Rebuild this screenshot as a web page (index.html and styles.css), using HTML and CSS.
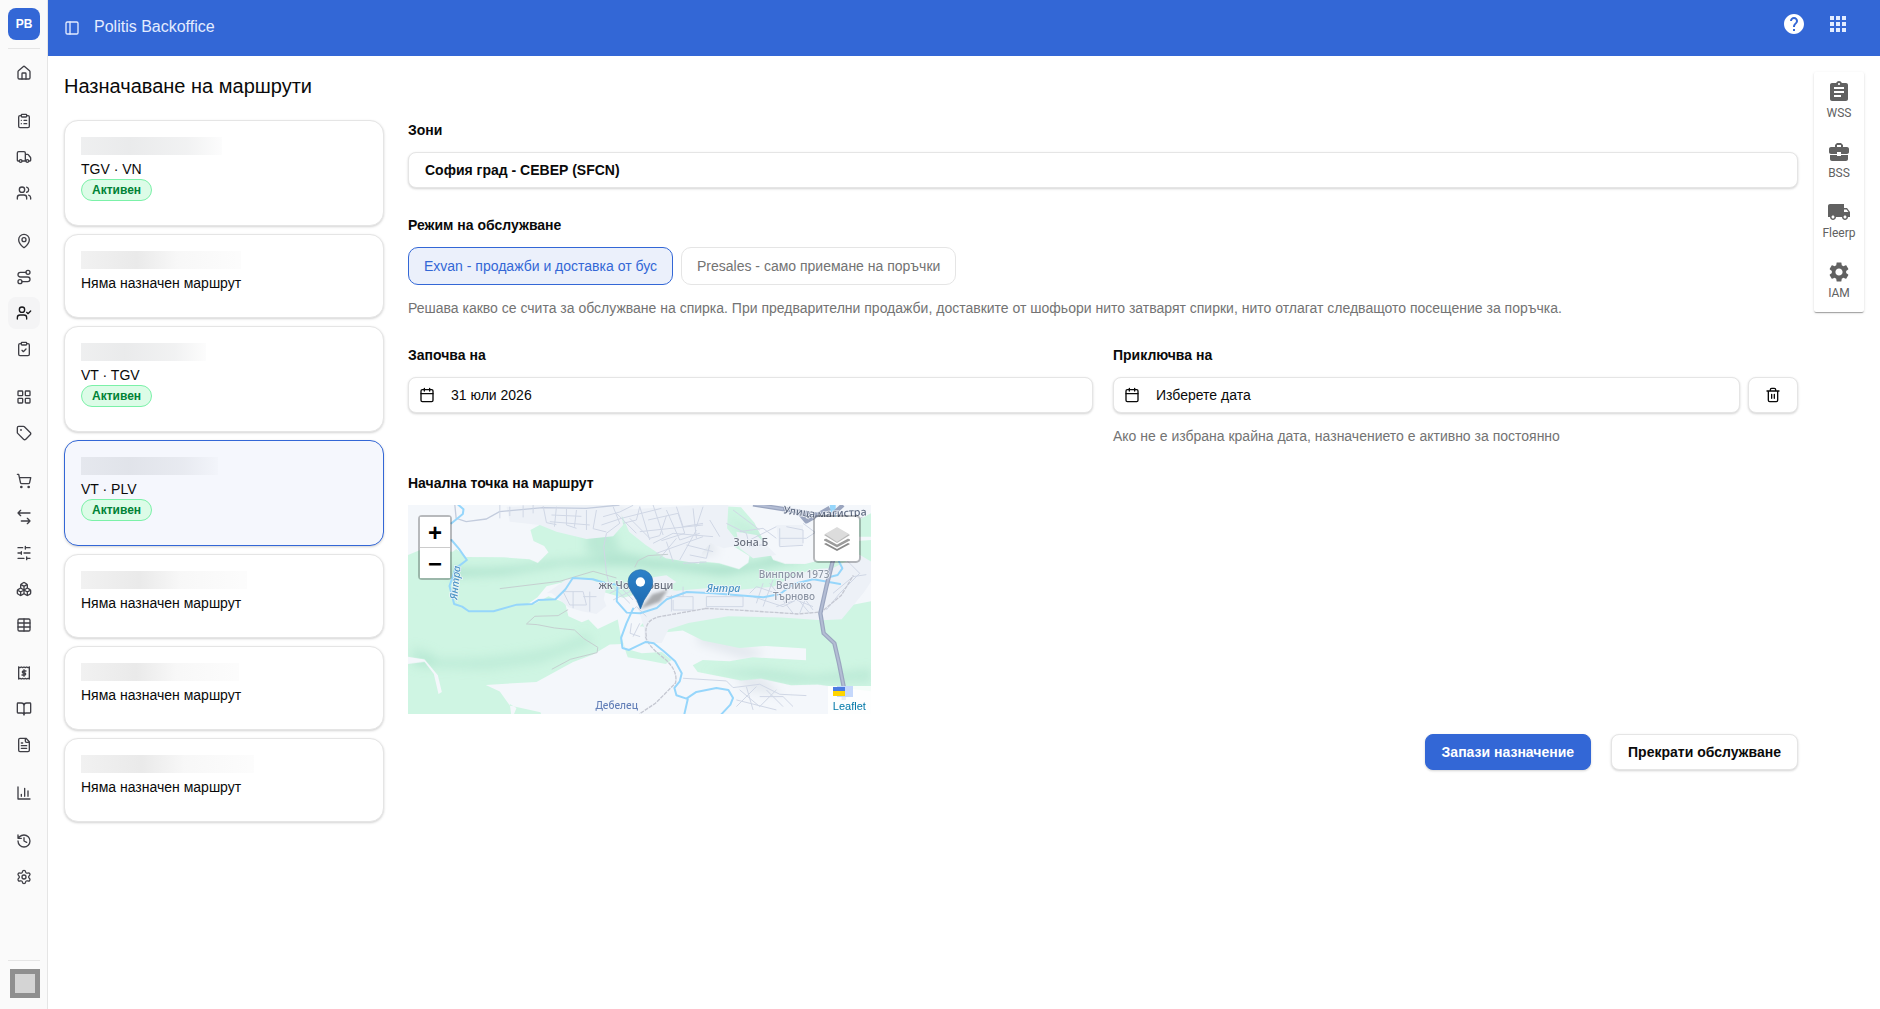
FILE: index.html
```html
<!DOCTYPE html>
<html lang="bg">
<head>
<meta charset="utf-8">
<meta name="viewport" content="width=device-width, initial-scale=1">
<title>Politis Backoffice</title>
<link rel="stylesheet" href="styles.css">
</head>
<body>
<div class="app">
  <aside class="sidebar">
    <a class="logo" href="#">PB</a>
    <nav class="nav" aria-label="Меню">
      <div class="nav-group">
        <a class="nav-item" href="#" aria-label="Начало"><svg class="icon" viewBox="0 0 24 24"><path d="M15 21v-8a1 1 0 0 0-1-1h-4a1 1 0 0 0-1 1v8"/><path d="M3 10a2 2 0 0 1 .709-1.528l7-5.999a2 2 0 0 1 2.582 0l7 5.999A2 2 0 0 1 21 10v9a2 2 0 0 1-2 2H5a2 2 0 0 1-2-2z"/></svg></a>
      </div>
      <div class="nav-group">
        <a class="nav-item" href="#" aria-label="Поръчки"><svg class="icon" viewBox="0 0 24 24"><rect width="8" height="4" x="8" y="2" rx="1"/><path d="M16 4h2a2 2 0 0 1 2 2v14a2 2 0 0 1-2 2H6a2 2 0 0 1-2-2V6a2 2 0 0 1 2-2h2M12 11h4M12 16h4M8 11h.01M8 16h.01"/></svg></a>
        <a class="nav-item" href="#" aria-label="Доставки"><svg class="icon" viewBox="0 0 24 24"><path d="M14 18V6a2 2 0 0 0-2-2H4a2 2 0 0 0-2 2v11a1 1 0 0 0 1 1h2M15 18H9M19 18h2a1 1 0 0 0 1-1v-3.65a1 1 0 0 0-.22-.624l-3.48-4.35A1 1 0 0 0 17.52 8H14"/><circle cx="17" cy="18" r="2"/><circle cx="7" cy="18" r="2"/></svg></a>
        <a class="nav-item" href="#" aria-label="Клиенти"><svg class="icon" viewBox="0 0 24 24"><path d="M16 21v-2a4 4 0 0 0-4-4H6a4 4 0 0 0-4 4v2"/><circle cx="9" cy="7" r="4"/><path d="M22 21v-2a4 4 0 0 0-3-3.87M16 3.13a4 4 0 0 1 0 7.75"/></svg></a>
      </div>
      <div class="nav-group">
        <a class="nav-item" href="#" aria-label="Обекти"><svg class="icon" viewBox="0 0 24 24"><path d="M20 10c0 4.993-5.539 10.193-7.399 11.799a1 1 0 0 1-1.202 0C9.539 20.193 4 14.993 4 10a8 8 0 0 1 16 0"/><circle cx="12" cy="10" r="3"/></svg></a>
        <a class="nav-item" href="#" aria-label="Маршрути"><svg class="icon" viewBox="0 0 24 24"><circle cx="6" cy="19" r="3"/><path d="M9 19h8.500a3.500 3.500 0 0 0 0-7h-11a3.500 3.500 0 0 1 0-7H15"/><circle cx="18" cy="5" r="3"/></svg></a>
        <a class="nav-item nav-item--active" href="#" aria-label="Назначаване на маршрути" aria-current="page"><svg class="icon" viewBox="0 0 24 24"><path d="m16 11 2 2 4-4M16 21v-2a4 4 0 0 0-4-4H6a4 4 0 0 0-4 4v2"/><circle cx="9" cy="7" r="4"/></svg></a>
        <a class="nav-item" href="#" aria-label="Задачи"><svg class="icon" viewBox="0 0 24 24"><rect width="8" height="4" x="8" y="2" rx="1"/><path d="M16 4h2a2 2 0 0 1 2 2v14a2 2 0 0 1-2 2H6a2 2 0 0 1-2-2V6a2 2 0 0 1 2-2h2M9 14l2 2 4-4"/></svg></a>
      </div>
      <div class="nav-group">
        <a class="nav-item" href="#" aria-label="Категории"><svg class="icon" viewBox="0 0 24 24"><rect width="7" height="7" x="3" y="3" rx="1"/><rect width="7" height="7" x="14" y="3" rx="1"/><rect width="7" height="7" x="14" y="14" rx="1"/><rect width="7" height="7" x="3" y="14" rx="1"/></svg></a>
        <a class="nav-item" href="#" aria-label="Етикети"><svg class="icon" viewBox="0 0 24 24"><path d="M12.586 2.586A2 2 0 0 0 11.172 2H4a2 2 0 0 0-2 2v7.172a2 2 0 0 0 .586 1.414l8.704 8.704a2.426 2.426 0 0 0 3.420 0l6.580-6.580a2.426 2.426 0 0 0 0-3.420z"/><circle cx="7.500" cy="7.500" r=".5"/></svg></a>
      </div>
      <div class="nav-group">
        <a class="nav-item" href="#" aria-label="Продажби"><svg class="icon" viewBox="0 0 24 24"><circle cx="8" cy="21" r="1"/><circle cx="19" cy="21" r="1"/><path d="M2.050 2.050h2l2.660 12.420a2 2 0 0 0 2 1.580h9.780a2 2 0 0 0 1.950-1.570l1.650-7.430H5.120"/></svg></a>
        <a class="nav-item" href="#" aria-label="Движения"><svg class="icon" viewBox="0 0 24 24"><path d="M21 18H8M17 22l4-4-4-4M3 6h18M7 2 3 6l4 4"/></svg></a>
        <a class="nav-item" href="#" aria-label="Настройки на наличности"><svg class="icon" viewBox="0 0 24 24"><path d="M21 4h-7M10 4H3M21 12h-9M8 12H3M21 20h-5M12 20H3M14 2v4M8 10v4M16 18v4"/></svg></a>
        <a class="nav-item" href="#" aria-label="Складове"><svg class="icon" viewBox="0 0 24 24"><path d="M2.970 12.920A2 2 0 0 0 2 14.630v3.240a2 2 0 0 0 .97 1.710l3 1.800a2 2 0 0 0 2.060 0L12 19v-5.500l-5-3-4.030 2.420ZM7 16.500l-4.740-2.850M7 16.500l5-3M7 16.500v5.170M12 13.500V19l3.970 2.380a2 2 0 0 0 2.060 0l3-1.800a2 2 0 0 0 .97-1.710v-3.240a2 2 0 0 0-.97-1.710L17 10.500l-5 3ZM17 16.500l-5-3M17 16.500l4.740-2.850M17 16.500v5.170M7.970 4.420A2 2 0 0 0 7 6.130v4.370l5 3 5-3V6.130a2 2 0 0 0-.97-1.710l-3-1.800a2 2 0 0 0-2.060 0l-3 1.800ZM12 8 7.260 5.150M12 8l4.740-2.850M12 13.500V8"/></svg></a>
        <a class="nav-item" href="#" aria-label="Таблици"><svg class="icon" viewBox="0 0 24 24"><rect width="18" height="18" x="3" y="3" rx="2"/><path d="M12 3v18M3 9h18M3 15h18"/></svg></a>
      </div>
      <div class="nav-group">
        <a class="nav-item" href="#" aria-label="Фактури"><svg class="icon" viewBox="0 0 24 24"><path d="M4 3v18M20 3v18M4 3l2 1 2-1 2 1 2-1 2 1 2-1 2 1 2-1M4 21l2-1 2 1 2-1 2 1 2-1 2 1 2-1 2 1M15 9h-4a1.500 1.500 0 0 0 0 3h2a1.500 1.500 0 0 1 0 3H9M12 7v10"/></svg></a>
        <a class="nav-item" href="#" aria-label="Каталог"><svg class="icon" viewBox="0 0 24 24"><path d="M12 7v14M3 18a1 1 0 0 1-1-1V4a1 1 0 0 1 1-1h5a4 4 0 0 1 4 4 4 4 0 0 1 4-4h5a1 1 0 0 1 1 1v13a1 1 0 0 1-1 1h-6a3 3 0 0 0-3 3 3 3 0 0 0-3-3z"/></svg></a>
        <a class="nav-item" href="#" aria-label="Документи"><svg class="icon" viewBox="0 0 24 24"><path d="M15 2H6a2 2 0 0 0-2 2v16a2 2 0 0 0 2 2h12a2 2 0 0 0 2-2V7ZM14 2v4a2 2 0 0 0 2 2h4M10 9H8M16 13H8M16 17H8"/></svg></a>
      </div>
      <div class="nav-group">
        <a class="nav-item" href="#" aria-label="Отчети"><svg class="icon" viewBox="0 0 24 24"><path d="M3 3v18h18M18 17V9M13 17V5M8 17v-3"/></svg></a>
      </div>
      <div class="nav-group">
        <a class="nav-item" href="#" aria-label="История"><svg class="icon" viewBox="0 0 24 24"><path d="M3 12a9 9 0 1 0 9-9 9.750 9.750 0 0 0-6.740 2.740L3 8M3 3v5h5M12 7v5l4 2"/></svg></a>
        <a class="nav-item" href="#" aria-label="Настройки"><svg class="icon" viewBox="0 0 24 24"><path d="M9.671 4.136a2.340 2.340 0 0 1 4.659 0 2.340 2.340 0 0 0 3.319 1.915 2.340 2.340 0 0 1 2.330 4.033 2.340 2.340 0 0 0 0 3.831 2.340 2.340 0 0 1-2.330 4.033 2.340 2.340 0 0 0-3.319 1.915 2.340 2.340 0 0 1-4.659 0 2.340 2.340 0 0 0-3.320-1.915 2.340 2.340 0 0 1-2.330-4.033 2.340 2.340 0 0 0 0-3.831A2.340 2.340 0 0 1 6.350 6.051a2.340 2.340 0 0 0 3.319-1.915"/><circle cx="12" cy="12" r="3"/></svg></a>
      </div>
    </nav>
    <div class="sidebar-foot">
      <button class="avatar" type="button" aria-label="Профил"></button>
    </div>
  </aside>

  <div class="shell">
    <header class="topbar">
      <button class="icon-button" type="button" aria-label="Скрий менюто"><svg class="icon" viewBox="0 0 24 24"><rect width="18" height="18" x="3" y="3" rx="2"/><path d="M9 3v18"/></svg></button>
      <span class="topbar-title">Politis Backoffice</span>
      <div class="topbar-actions">
        <button class="icon-button icon-button--help" type="button" aria-label="Помощ"><svg class="glyph" viewBox="0 0 24 24"><path d="M12 2C6.480 2 2 6.480 2 12s4.480 10 10 10 10-4.480 10-10S17.520 2 12 2zm1 17h-2v-2h2v2zm2.070-7.750-.9.92C13.450 12.900 13 13.500 13 15h-2v-.5c0-1.100.45-2.100 1.170-2.830l1.240-1.260c.37-.36.590-.860.590-1.410 0-1.100-.9-2-2-2s-2 .9-2 2H8c0-2.210 1.790-4 4-4s4 1.790 4 4c0 .88-.36 1.680-.93 2.250z"/></svg></button>
        <button class="icon-button" type="button" aria-label="Приложения"><svg class="glyph" viewBox="0 0 24 24"><path d="M4 8h4V4H4v4zm6 12h4v-4h-4v4zm-6 0h4v-4H4v4zm0-6h4v-4H4v4zm6 0h4v-4h-4v4zm6-10v4h4V4h-4zm-6 4h4V4h-4v4zm6 6h4v-4h-4v4zm0 6h4v-4h-4v4z"/></svg></button>
      </div>
    </header>

    <div class="content">
      <main class="page">
        <h1 class="page-title">Назначаване на маршрути</h1>
        <div class="columns">
          <ul class="cards">
            <li><button class="card" type="button"><span class="masked" style="width:141px"></span><span class="card-text">TGV · VN</span><span class="badge">Активен</span></button></li>
            <li><button class="card" type="button"><span class="masked masked--long" style="width:160px"></span><span class="card-text">Няма назначен маршрут</span></button></li>
            <li><button class="card" type="button"><span class="masked" style="width:125px"></span><span class="card-text">VT · TGV</span><span class="badge">Активен</span></button></li>
            <li><button class="card card--selected" type="button" aria-pressed="true"><span class="masked" style="width:137px"></span><span class="card-text">VT · PLV</span><span class="badge">Активен</span></button></li>
            <li><button class="card" type="button"><span class="masked masked--long" style="width:166px"></span><span class="card-text">Няма назначен маршрут</span></button></li>
            <li><button class="card" type="button"><span class="masked masked--long" style="width:158px"></span><span class="card-text">Няма назначен маршрут</span></button></li>
            <li><button class="card" type="button"><span class="masked masked--long" style="width:173px"></span><span class="card-text">Няма назначен маршрут</span></button></li>
          </ul>

          <form class="form">
            <div class="field">
              <label class="label" for="zones">Зони</label>
              <select class="control control--select" id="zones"><option>София град - СЕВЕР (SFCN)</option></select>
            </div>

            <div class="field" role="group" aria-labelledby="mode-label">
              <span class="label" id="mode-label">Режим на обслужване</span>
              <div class="modes">
                <button class="mode mode--selected" type="button" aria-pressed="true">Exvan - продажби и доставка от бус</button>
                <button class="mode" type="button" aria-pressed="false">Presales - само приемане на поръчки</button>
              </div>
              <p class="hint">Решава какво се счита за обслужване на спирка. При предварителни продажби, доставките от шофьори нито затварят спирки, нито отлагат следващото посещение за поръчка.</p>
            </div>

            <div class="dates">
              <div class="field">
                <label class="label" for="start">Започва на</label>
                <button class="control control--date" id="start" type="button"><svg class="icon" viewBox="0 0 24 24"><path d="M8 2v4M16 2v4M3 10h18"/><rect width="18" height="18" x="3" y="4" rx="2"/></svg>31 юли 2026</button>
              </div>
              <div class="field">
                <label class="label" for="end">Приключва на</label>
                <div class="date-row">
                  <button class="control control--date" id="end" type="button"><svg class="icon" viewBox="0 0 24 24"><path d="M8 2v4M16 2v4M3 10h18"/><rect width="18" height="18" x="3" y="4" rx="2"/></svg>Изберете дата</button>
                  <button class="control control--clear" type="button" aria-label="Изчисти датата"><svg class="icon" viewBox="0 0 24 24"><path d="M3 6h18M19 6v14a2 2 0 0 1-2 2H7a2 2 0 0 1-2-2V6M8 6V4a2 2 0 0 1 2-2h4a2 2 0 0 1 2 2v2M10 11v6M14 11v6"/></svg></button>
                </div>
                <p class="hint">Ако не е избрана крайна дата, назначението е активно за постоянно</p>
              </div>
            </div>

            <div class="field">
              <span class="label">Начална точка на маршрут</span>
              <div class="map">
                <svg class="map-tiles" viewBox="24 135 1390 627" preserveAspectRatio="xMidYMid slice" role="img" aria-label="Карта">
                  <defs>
                    <filter id="soft" x="-20%" y="-50%" width="140%" height="200%"><feGaussianBlur stdDeviation="14"/></filter>
                    <filter id="shade" x="-30%" y="-50%" width="160%" height="200%"><feGaussianBlur stdDeviation="4"/></filter>
                    <linearGradient id="pin" x1="0" y1="0" x2="0" y2="1"><stop offset="0" stop-color="#2e82c9"/><stop offset="1" stop-color="#1d69b0"/></linearGradient>
                    <clipPath id="woods"><use href="#wood-north"/><use href="#wood-south"/><use href="#wood-east"/></clipPath>
                  </defs>
                  <rect x="24" y="135" width="1390" height="627" fill="#f4f7fb"/>
                  <g filter="url(#soft)" fill="#e4e9ef">
                    <path d="M24 335h70l60 60-60 30-70-40z"/>
                    <path d="M360 140h300l60 40 180 10 60 90-120 20-80-50-140-50-200-20z"/>
                    <path d="M900 500l200 80-60 20-150-50zM1000 640l90 10 60 60-110-20z"/>
                    <path d="M1300 300l100 10-60 120-60 40-200-20 120-60z"/>
                  </g>
                  <g fill="#cff5e3">
                    <path id="wood-north" d="M24 285l35-14 100 4 10-8 30 24 110 1 80 6 25 11 32-32-13-19-32-15-9-33 40-22 60 12 60 22 66 1 14-20 28-38 30 22 40 8 20 25 18 26 30 20 40 28 60 10 60 6 60 18 28-20 3-20-60-37-38-60 3-53 70 4 40 46 30 60 26 52 36 12h60l58-14 98-55 58-4v80l-60 24-60-10-60 22-80 18-60 34-60 6-110-10-70-8-100-2-60 10-40 10-70-20-70-12-50-12-40 10-27 33-40 28-17 30-50 8-20 12-60 5-40 18-70 6-40 2-40-20-15-30 8-70-45-26-40-8-60-2z"/>
                    <path id="wood-south" d="M24 388l80 52 50-34 12 30 100 20 80-20 60-5 40-22 50 20 10 40 40 18 20-8 28 28 60-28 8 45 14 42 50 14 60-4 30 24-18 12-54-10-60-10-14-40-40 2-50 30-60 22-110 60-152 9 42 20 30 42 92 20 12 37H330l20-50-20-12 8 62H24V612l50-6 28 36 14 60 10-6-12-50-40-48-50-8z"/>
                    <path id="wood-east" d="M720 500l20-22 80-14 90-18 120 10 120 10 110-2 30-16 124-24v270l-100-12-60-8-80 2-90-20-60 6-80-16-50-10-15-20 30-16 80 4 70-12 160 9v-35l-120-8-80 6-110-22-60-30-80 8-40-20z"/>
                    <path d="M1330 205l84-45v70h-60z"/>
                  </g>
                  <g clip-path="url(#woods)">
                    <g filter="url(#soft)" fill="#abe0cb">
                      <path d="M150 325q160 10 300-20 200-20 380 0 220 30 320-30l100-10-60 40-220 40-240-30-240-2-180 30-160 6z"/>
                      <path d="M560 200l80 10 20 60 160 50-60 10-200-50z" opacity=".55"/>
                      <path d="M60 590q180 20 400-30l100-40 20 30-160 60-160 20-220-10z" opacity=".4"/>
                      <path d="M920 636l160-10 160 20 174-20v40l-240 4z" opacity=".5"/>
                      <path d="M40 560l60 20 10 40-80-10z" opacity=".4"/>
                      <path d="M980 170l120 50 70 60-110-10z" opacity=".3"/>
                    </g>
                  </g>
                  <g fill="#edf1f7">
                    <path d="M440 400l60-42 60-4 40 16 20 8-8 40 8 20-30 24-44-8-40-12-50-42z"/>
                    <path d="M690 370l40-14 70-10 30 20-40 20 40 6 100-8 80 6 110-10 80-40 60-14 40-2 80-40 40 24 12 30-40 60-66 80-60 3-120-8-160-4-120 20-60 20-20 40-50 0-4-50z"/>
                    <path d="M320 140l340-5 10 60-30 34-80 8-90-22-50-20-90-10z"/>
                    <path d="M660 150l250-15 76 0-4 70 40 50-50 10-40-16-24 28-10 34-100-16-60-40-50-40z"/>
                    <path d="M1130 195h80v62h-74zM1010 215l60 10 60 60-70 10-40-30z"/>
                  </g>
                  <g fill="none" stroke="#d0d7e5" stroke-width="3">
                    <path d="M165 135l4 40 30 10 60-8 40-22 130-12 130 2 100-10" stroke="#c3ccdd" stroke-width="4"/>
                    <path d="M300 135v40M330 140v28M370 136v36M400 130v30M430 138l10 50 30 6M470 140l-6 60M500 145v50l30 10M530 150l-6 50M560 150v60M590 150l-10 56 40 10M455 165l90 4M450 185l120 10"/>
                    <path d="M640 140l20 50-40 30-8 40 8 80 10 40"/>
                    <path d="M610 170l50-14 40-20M605 195l60-20 120-30M650 160l60 60M670 190l40-10 10-40M690 175l60 60 30-8 20-60M720 140l30 100M745 180l90-20 20 60-70 22M760 135l30 90M800 150l40 90 60-20M830 140l20 60 60-10M720 215l190-20M760 250l60-30 120 10M770 280l140-50M780 295l50-60M820 305l-20-60M840 300l50-90M870 285l50 10 10-40M850 310l70-4M860 255l80 20M880 145l10 90M910 140l-20 60M930 180l30 50"/>
                    <path d="M980 190l60 30 10 40 40-6M1020 215l70-10 40 30M1050 240l80-40M1140 205v55l70-4M1140 235h80l30-20M1160 200l50 10v40M1210 190l40 30M1000 150l80 60"/>
                    <path d="M490 395h60l10 40h-50zM520 395v50M550 410h40M570 395v60M640 380l50 50M650 370l50 50M670 365l30 40M630 400l60-30M640 420l60-30"/>
                    <path d="M800 410h80v40h-60v-30M815 405v50M850 380v30M920 410h110v30H920zM1050 400l20-20 60 20M1070 430l20-60M1090 440l30-80M1110 370l70 90M1130 440l60-20 50 20M1180 400l50 60M1220 410l-20 50M1060 410l90 30 60-30 30 40"/>
                    <path d="M1280 450l40-50 60-60-40-40M1300 400l60-50 40-6M1390 170l-50 30"/>
                    <path d="M690 460l20-20 30 30M700 530l20-40M695 490l-4 30 30 10"/>
                    <path d="M850 655l130 8 20 20 80-10 60 30 80 4M1020 690l60 50 50-50M1040 680l20 70M1070 680l-60 60M1080 710h70l30 30M1100 690l50 50M1010 720l120 30"/>
                  </g>
                  <path d="M300 386l180-22 100-30 70 20M594 562l-2 16-80 20-56 30M594 562l-42-26-28-26-60-6-52-10-32-2 25-23 70-2 30-18M705 322l10-20 30-15 60-4M740 395l-30 30" fill="none" stroke="#c5cfd0" stroke-width="3"/>
                  <path d="M915 445l110 6 170 11 70-6 60-50 36-60M740 530q-10-50 40-60l136-24M737 530q10 30 50 60 50 40 40 80l-60 60-48 32" fill="none" stroke="#c5c8d2" stroke-width="4" stroke-dasharray="12 3"/>
                  <g fill="none" stroke="#96d6fb" stroke-width="6" stroke-linecap="round" stroke-linejoin="round">
                    <path d="M155 190l34-28 2-14-16-14M155 240l22 26 24 34-34 26-18 52 14 54 24 8 20 14h74l70-20 46-2 20-12 50-2 30-30 22-34 60 4 40 12 34 4-2 50 30 34 40 2 50-16 30-26 60-22 80 4 150 12 50-10 40-30 60-14 80 14"/>
                    <path d="M700 446l-20 44-16 44 4 30 20 6 50-24 24 4 30 24 34 30 20 36-6 24-16 20 6 22 30 10 30-20 60-12 36 6 14 24-8 20-28 30M864 718l-10 44M1318 305l10 20-14 20-24 6"/>
                  </g>
                  <path d="M1290 135h18v40h-14z" fill="#96d6fb"/>
                  <path d="M1300 300l-20 80-18 80 10 60 32 30 14 60 14 70v40M1060 133l90 14 140 24 40-36M1200 160l20 24 70-40" fill="none" stroke="#9aa5bf" stroke-width="13" stroke-linejoin="round"/>
                  <path d="M1300 300l-20 80-18 80 10 60 32 30 14 60 14 70M1060 133l90 14" fill="none" stroke="#b3bdd4" stroke-width="6" stroke-linejoin="round"/>
                  <g class="map-labels">
                    <text x="596" y="386">жк Чолаковци</text>
                    <text x="1001" y="257">Зона Б</text>
                    <g class="map-labels-muted" text-anchor="middle"><text x="1183" y="353">Винпром 1973</text><text x="1183" y="387">Велико</text><text x="1183" y="420">Търново</text></g>
                    <text class="map-water" x="920" y="396">Янтра</text>
                    <text class="map-water" transform="translate(172 420) rotate(-84)">Янтра</text>
                    <text class="map-town" x="587" y="747">Дебелец</text>
                    <text class="map-road" transform="translate(1150 160) rotate(8)">Улица</text>
                    <text class="map-road" transform="translate(1254 174) rotate(-3)">магистра</text>
                  </g>
                  <path d="M722 447l36-44 46-14-24 36z" fill="#444" opacity=".4" filter="url(#shade)"/>
                  <path d="M722 447q-8-26-26-50-11-17-11-32a37 36 0 0 1 74 0q0 15-11 32-18 24-26 50z" fill="url(#pin)" stroke="#2a6ea8" stroke-width="2"/>
                  <circle cx="722" cy="366" r="14" fill="#fff"/>
                </svg>
                <div class="map-zoom">
                  <button class="map-button" type="button" aria-label="Приближи">+</button>
                  <button class="map-button" type="button" aria-label="Отдалечи">−</button>
                </div>
                <button class="map-layers" type="button" aria-label="Слоеве"><svg viewBox="0 0 26 26"><path d="M0 18l13 7 13-7-2-1-11 6-11-6z" fill="#8a8a8a"/><path d="M0 14l13 7 13-7-2-1-11 6-11-6z" fill="#a0a0a0" stroke="#777" stroke-width=".5"/><path d="M0 9l13 8 13-8-13-7z" fill="#b9b9b9"/><path d="M1 8l12 8 12-8-12-7z" fill="#dcdcdc"/></svg></button>
                <a class="map-credit" href="#"><svg viewBox="0 0 20 12"><path d="M4 0h16v11H4z" fill="#c5d8fb"/><path d="M0 1h12v4H0z" fill="#4c7be1"/><path d="M0 5h12v5H0z" fill="#ffd500"/></svg>Leaflet</a>
              </div>
            </div>

            <div class="actions">
              <button class="button button--primary" type="submit">Запази назначение</button>
              <button class="button" type="button">Прекрати обслужване</button>
            </div>
          </form>
        </div>
      </main>

      <nav class="rail" aria-label="Модули">
        <a class="rail-item" href="#"><svg class="glyph" viewBox="0 0 24 24"><path d="M19 3h-4.180C14.400 1.840 13.300 1 12 1c-1.300 0-2.400.84-2.820 2H5c-1.100 0-2 .9-2 2v14c0 1.100.9 2 2 2h14c1.100 0 2-.9 2-2V5c0-1.100-.9-2-2-2zm-7 0c.55 0 1 .45 1 1s-.45 1-1 1-1-.45-1-1 .45-1 1-1zm2 14H7v-2h7v2zm3-4H7v-2h10v2zm0-4H7V7h10v2z"/></svg>WSS</a>
        <a class="rail-item" href="#"><svg class="glyph" viewBox="0 0 24 24"><path d="M10 16v-1H3.010L3 19c0 1.110.89 2 2 2h14c1.110 0 2-.89 2-2v-4h-7v1h-4zm10-9h-4.010V5l-2-2h-4l-2 2v2H4c-1.100 0-2 .9-2 2v3c0 1.110.89 2 2 2h6v-2h4v2h6c1.100 0 2-.9 2-2V9c0-1.100-.9-2-2-2zm-6 0h-4V5h4v2z"/></svg>BSS</a>
        <a class="rail-item" href="#"><svg class="glyph" viewBox="0 0 24 24"><path d="M20 8h-3V4H3c-1.100 0-2 .9-2 2v11h2c0 1.660 1.340 3 3 3s3-1.340 3-3h6c0 1.660 1.340 3 3 3s3-1.340 3-3h2v-5l-3-4zM6 18.500c-.83 0-1.500-.67-1.500-1.500s.67-1.500 1.500-1.500 1.500.67 1.500 1.500-.67 1.500-1.500 1.500zm13.500-9l1.960 2.500H17V9.500h2.500zm-1.500 9c-.83 0-1.500-.67-1.500-1.500s.67-1.500 1.500-1.500 1.500.67 1.500 1.500-.67 1.500-1.500 1.500z"/></svg>Fleerp</a>
        <a class="rail-item" href="#"><svg class="glyph" viewBox="0 0 24 24"><path d="M19.140 12.940c.04-.3.060-.61.060-.94 0-.32-.02-.64-.07-.94l2.030-1.580c.18-.14.230-.41.120-.61l-1.920-3.320c-.12-.22-.37-.29-.59-.22l-2.390.960c-.5-.38-1.030-.7-1.620-.94l-.36-2.540c-.04-.24-.24-.41-.48-.41h-3.840c-.24 0-.43.170-.47.410l-.36 2.540c-.59.240-1.130.570-1.620.940l-2.390-.96c-.22-.08-.47 0-.59.220L2.740 8.870c-.12.210-.08.470.12.610l2.030 1.580c-.05.300-.09.630-.09.940s.02.640.07.940l-2.030 1.580c-.18.140-.23.410-.12.610l1.920 3.320c.12.220.37.290.59.220l2.390-.96c.5.380 1.030.7 1.620.94l.36 2.540c.05.240.24.410.48.410h3.840c.24 0 .44-.17.470-.41l.36-2.540c.59-.24 1.130-.56 1.620-.94l2.390.96c.22.080.47 0 .59-.22l1.920-3.320c.12-.22.070-.47-.12-.61l-2.010-1.580zM12 15.600c-1.980 0-3.600-1.620-3.600-3.600s1.620-3.600 3.600-3.600 3.600 1.620 3.600 3.600-1.620 3.600-3.600 3.600z"/></svg>IAM</a>
      </nav>
    </div>
  </div>
</div>
</body>
</html>
```

FILE: styles.css
```css
:root {
  --blue: #3367d6;
  --line: #e5e5e5;
  --ink: #0a0a0a;
  --muted: #737373;
  --shadow: 0 1px 3px rgba(0, 0, 0, .1), 0 1px 2px rgba(0, 0, 0, .08);
}

* { box-sizing: border-box; }

body {
  margin: 0;
  background: #fff;
  color: var(--ink);
  font: 14px/20px "Liberation Sans", Arial, sans-serif;
}

button, select { font: inherit; color: inherit; cursor: pointer; }
a { color: inherit; text-decoration: none; }

.icon {
  width: 16px;
  height: 16px;
  flex: none;
  fill: none;
  stroke: currentColor;
  stroke-width: 2;
  stroke-linecap: round;
  stroke-linejoin: round;
}

.glyph { width: 24px; height: 24px; display: block; fill: currentColor; }

.app { display: flex; min-height: 100vh; }

/* Sidebar */
.sidebar {
  width: 48px;
  flex: none;
  display: flex;
  flex-direction: column;
  align-items: center;
  background: #fafafa;
  border-right: 1px solid var(--line);
  color: #3f3f46;
  padding: 8px 0 0 1px;
}

.logo {
  width: 32px;
  height: 32px;
  display: grid;
  place-items: center;
  border-radius: 8px;
  background: var(--blue);
  color: #fff;
  font-size: 12px;
  font-weight: 700;
}

.nav {
  width: 32px;
  margin-top: 8px;
  padding-top: 8px;
  border-top: 1px solid var(--line);
  display: flex;
  flex-direction: column;
  gap: 16px;
}

.nav-group { display: flex; flex-direction: column; gap: 4px; }

.nav-item {
  width: 32px;
  height: 32px;
  display: grid;
  place-items: center;
  border-radius: 8px;
}

.nav-item--active { background: #f4f4f5; color: #18181b; }

.sidebar-foot {
  width: 32px;
  margin-top: auto;
  padding: 8px 0 11px;
  border-top: 1px solid var(--line);
  display: grid;
  justify-content: end;
}

.avatar {
  width: 30px;
  height: 29px;
  padding: 0;
  border: 5px solid #8f8f8f;
  background: #d4d4d4;
}

/* Header */
.shell { flex: 1; min-width: 0; }

.topbar {
  height: 56px;
  display: flex;
  align-items: center;
  gap: 14px;
  padding: 0 30px 0 16px;
  background: var(--blue);
  color: #e3ecff;
}

.topbar-title { padding-bottom: 2px; font-size: 16px; }

.topbar-actions {
  margin-left: auto;
  padding-bottom: 8px;
  display: flex;
  gap: 20px;
}

.icon-button { display: block; padding: 0; border: 0; background: none; }
.icon-button .icon { display: block; }
.icon-button--help { color: #fff; }

/* Page */
.content {
  display: flex;
  align-items: flex-start;
  gap: 16px;
  padding: 16px;
}

.page { flex: 1; min-width: 0; }

.page-title {
  margin: 0 0 20px;
  font-size: 20px;
  line-height: 28px;
  font-weight: 400;
}

.columns {
  display: grid;
  grid-template-columns: 320px minmax(0, 1fr);
  gap: 24px;
  align-items: start;
}

.cards {
  margin: 0;
  padding: 0;
  list-style: none;
  display: grid;
  gap: 8px;
}

.card {
  width: 100%;
  display: flex;
  flex-direction: column;
  align-items: flex-start;
  padding: 16px 16px 24px;
  border: 1px solid var(--line);
  border-radius: 14px;
  background: #fff;
  box-shadow: var(--shadow);
  text-align: left;
}

.card--selected { border-color: var(--blue); background: #f5f7fd; }

.masked {
  height: 18px;
  margin-bottom: 4px;
  background: linear-gradient(90deg, rgba(20, 30, 40, .07), rgba(20, 30, 40, .09) 35%, rgba(20, 30, 40, .06) 75%, rgba(20, 30, 40, .01));
}

.masked--long {
  background: linear-gradient(90deg, rgba(20, 20, 20, .06), rgba(20, 20, 20, .09) 35%, rgba(20, 20, 20, .03) 60%, rgba(20, 20, 20, .01));
}

.badge {
  padding: 2px 10px;
  border: 1px solid #7bf1a8;
  border-radius: 11px;
  background: #dcfce7;
  color: #008236;
  font-size: 12px;
  line-height: 16px;
  font-weight: 700;
}

/* Form */
.form { display: grid; gap: 28px; padding-top: 1px; }
.field { display: flex; flex-direction: column; align-items: stretch; }

.label {
  align-self: flex-start;
  margin-bottom: 13px;
  line-height: 18px;
  font-weight: 700;
}

.control {
  height: 36px;
  border: 1px solid var(--line);
  border-radius: 8px;
  background: #fff;
  box-shadow: var(--shadow);
}

.control--select {
  width: 100%;
  padding: 0 16px;
  appearance: none;
  font-weight: 700;
}

.control--date {
  flex: 1 0 auto;
  display: flex;
  align-items: center;
  gap: 16px;
  padding: 0 10px;
}

.control--clear {
  width: 50px;
  display: grid;
  place-items: center;
  padding: 0;
}

.modes { display: flex; gap: 8px; }

.mode {
  height: 38px;
  padding: 0 15px;
  border: 1px solid var(--line);
  border-radius: 10px;
  background: #fff;
  color: var(--muted);
}

.mode--selected { border-color: var(--blue); background: #ebf0fb; color: var(--blue); }

.hint { margin: 13px 0 0; color: var(--muted); }

.dates { display: grid; grid-template-columns: 1fr 1fr; gap: 20px; }
.dates .field > .control--date { flex-grow: 0; }
.date-row { display: flex; gap: 8px; }

/* Map */
.map {
  position: relative;
  width: 33.3%;
  min-width: 320px;
  aspect-ratio: 463 / 209;
  overflow: hidden;
}

.map-tiles { display: block; width: 100%; height: 100%; }

.map-labels {
  font: 500 32px "Noto Sans", sans-serif;
  fill: #6b7280;
  stroke: #f3f6fb;
  stroke-width: 4px;
  paint-order: stroke;
}

.map-labels-muted { fill: #8b94a3; font-size: 30px; }
.map-water { fill: #4a94c4; font-style: italic; }
.map-town { fill: #6480b8; font-size: 30px; }
.map-road { fill: #5f6b82; }

.map-zoom {
  position: absolute;
  top: 10px;
  left: 10px;
  width: 34px;
  border: 2px solid rgba(0, 0, 0, .25);
  border-radius: 4px;
  background-clip: padding-box;
}

.map-button {
  display: block;
  width: 30px;
  height: 30px;
  padding: 2px 0 0;
  border: 0;
  background: #fff;
  color: #000;
  font-size: 24px;
  line-height: 28px;
  font-weight: 700;
}

.map-button + .map-button { height: 31px; border-top: 1px solid #ccc; }

.map-layers {
  position: absolute;
  top: 10px;
  right: 10px;
  width: 48px;
  height: 48px;
  display: grid;
  place-items: center;
  padding: 0;
  border: 2px solid rgba(0, 0, 0, .25);
  border-radius: 5px;
  background: #fff;
  background-clip: padding-box;
}

.map-layers svg { width: 28px; height: 26px; }

.map-credit {
  position: absolute;
  right: 0;
  bottom: 0;
  padding: 0 5px;
  display: grid;
  background: rgba(255, 255, 255, .8);
  color: #0078a8;
  font-size: 11px;
  line-height: 16px;
}

.map-credit svg { width: 20px; height: 12px; }

/* Buttons */
.actions {
  display: flex;
  justify-content: flex-end;
  gap: 20px;
  margin-top: -8px;
}

.button {
  height: 36px;
  padding: 0 16px;
  border: 1px solid var(--line);
  border-radius: 8px;
  background: #fff;
  box-shadow: var(--shadow);
  font-weight: 700;
}

.button--primary { border-color: var(--blue); background: var(--blue); color: #fff; }

/* Module rail */
.rail {
  width: 50px;
  flex: none;
  background: #fff;
  border-radius: 2px;
  box-shadow: 0 2px 1px -1px rgba(0, 0, 0, .2), 0 1px 1px rgba(0, 0, 0, .14), 0 1px 3px rgba(0, 0, 0, .12);
}

.rail-item {
  height: 60px;
  display: flex;
  flex-direction: column;
  align-items: center;
  padding-top: 8px;
  color: #616161;
  font: 12px/18px Roboto, sans-serif;
}
```
